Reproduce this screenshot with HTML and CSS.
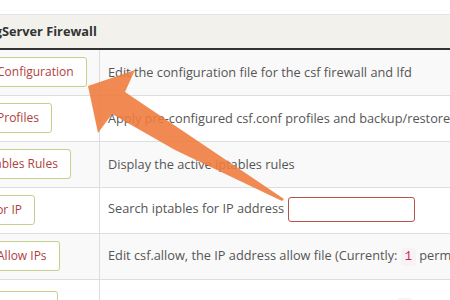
FILE: index.html
```html
<!DOCTYPE html>
<html>
	<head>
		<link rel="stylesheet" href="styles.css">
	</head>
	<body>
		<div id="page">
			<table class="csf-table">
				<thead>
					<tr><th colspan="2">csf - ConfigServer Firewall</th></tr>
				</thead>
				<tbody>
					<tr>
						<td class="act"><button class="btn">Firewall Configuration</button></td>
						<td>Edit the configuration file for the csf firewall and lfd</td>
					</tr>
					<tr>
						<td class="act"><button class="btn">Firewall Profiles</button></td>
						<td>Apply pre-configured csf.conf profiles and backup/restore csf.conf</td>
					</tr>
					<tr>
						<td class="act"><button class="btn">View iptables Rules</button></td>
						<td>Display the active iptables rules</td>
					</tr>
					<tr>
						<td class="act"><button class="btn">Search for IP</button></td>
						<td>Search iptables for IP address <input class="ip-input" type="text"/></td>
					</tr>
					<tr>
						<td class="act"><button class="btn">Firewall Allow IPs</button></td>
						<td>Edit csf.allow, the IP address allow file (Currently: <code>1</code> permanent IP allows)</td>
					</tr>
					<tr class="tall">
						<td class="act"><button class="btn">Firewall Deny IPs</button></td>
						<td>Edit csf.deny, the IP address deny file (Currently: <code>0</code> permanent IP bans)</td>
					</tr>
				</tbody>
			</table>
			<!-- callout arrow drawn over the table -->
			<svg class="arrow" width="450" height="300" viewBox="0 0 450 300">
				<polygon points="88,86 135,70 125,92 284,199 282,201 175,150 112,114 98,133"/>
			</svg>
		</div>
	</body>
</html>
```

FILE: styles.css
```css
body {
	margin: 0px;
	background-color: #fff;
	overflow: hidden;
	font-family: 'Open Sans', 'Liberation Sans', sans-serif;
	font-size: 13px;
	color: #555;
}
#page {
	position: relative;
	width: 450px;
	height: 300px;
	overflow: hidden;
}
.csf-table {
	margin-top: 14px;
	margin-left: -70px;
	width: 640px;
	border-collapse: collapse;
	border-top: 1px solid #e4e4e4;
	font-size: 12.75px;
}
.csf-table th {
	background-color: #f2f1eb;
	color: #333;
	font-size: 12.75px;
	font-weight: bold;
	text-align: left;
	height: 34px;
	padding: 0 8px;
	text-indent: -5px;
	border-bottom: 2px solid #333;
	box-sizing: border-box;
}
.csf-table td {
	padding: 7px 8px 8px 8px;
	border-top: 1px solid #ddd;
	vertical-align: middle;
	white-space: nowrap;
	line-height: 20px;
}
.csf-table tbody tr:nth-child(odd) td {
	background-color: #f9f9f9;
}
.csf-table tr.tall td {
	padding-top: 11px;
}
.csf-table td.act {
	width: 153px;
	border-right: 1px solid #ddd;
}
.btn {
	height: 30px;
	padding: 0 12px;
	background-color: #fff;
	border: 1px solid #c6d08c;
	border-radius: 3px;
	color: #b0413e;
	font-family: 'Open Sans', 'Liberation Sans', sans-serif;
	font-size: 12px;
	vertical-align: middle;
}
.ip-input {
	width: 127px;
	height: 25px;
	box-sizing: border-box;
	border: 1px solid #b5524a;
	border-radius: 3px;
	vertical-align: middle;
	margin-left: 1px;
}
code {
	font-family: 'Liberation Mono', monospace;
	font-size: 12px;
	color: #c7254e;
	background-color: #f9f2f4;
	padding: 2px 4px;
	border-radius: 3px;
}
.arrow {
	position: absolute;
	left: 0;
	top: 0;
	pointer-events: none;
}
.arrow polygon {
	fill: #ee7d3f;
	opacity: 0.9;
}
```
